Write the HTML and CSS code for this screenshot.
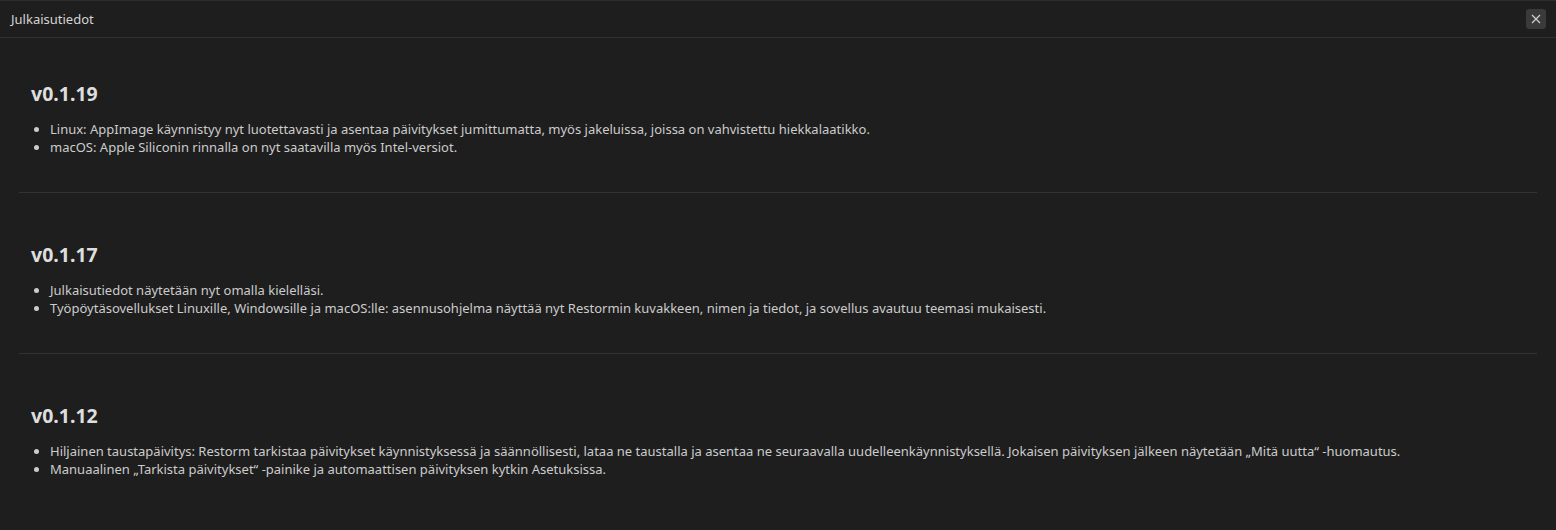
FILE: index.html
```html
<!DOCTYPE html>
<html lang="fi">
<head>
  <meta charset="UTF-8">
  <meta name="viewport" content="width=device-width, initial-scale=1.0">
  <title>Julkaisutiedot</title>
  <link rel="stylesheet" href="styles.css">
</head>
<body>
  <div class="dialog">
    <header class="dialog-header">
      <span class="dialog-title">Julkaisutiedot</span>
      <button class="close-btn" aria-label="Sulje">
        <svg width="10" height="10" viewBox="0 0 10 10">
          <path d="M1 1L9 9M9 1L1 9" stroke="#d0d0d0" stroke-width="1.2" fill="none"/>
        </svg>
      </button>
    </header>

    <main class="notes">
      <section class="release">
        <h2>v0.1.19</h2>
        <ul>
          <li>Linux: AppImage käynnistyy nyt luotettavasti ja asentaa päivitykset jumittumatta, myös jakeluissa, joissa on vahvistettu hiekkalaatikko.</li>
          <li>macOS: Apple Siliconin rinnalla on nyt saatavilla myös Intel-versiot.</li>
        </ul>
      </section>

      <section class="release">
        <h2>v0.1.17</h2>
        <ul>
          <li>Julkaisutiedot näytetään nyt omalla kielelläsi.</li>
          <li>Työpöytäsovellukset Linuxille, Windowsille ja macOS:lle: asennusohjelma näyttää nyt Restormin kuvakkeen, nimen ja tiedot, ja sovellus avautuu teemasi mukaisesti.</li>
        </ul>
      </section>

      <section class="release">
        <h2>v0.1.12</h2>
        <ul>
          <li>Hiljainen taustapäivitys: Restorm tarkistaa päivitykset käynnistyksessä ja säännöllisesti, lataa ne taustalla ja asentaa ne seuraavalla uudelleenkäynnistyksellä. Jokaisen päivityksen jälkeen näytetään „Mitä uutta“ -huomautus.</li>
          <li>Manuaalinen „Tarkista päivitykset“ -painike ja automaattisen päivityksen kytkin Asetuksissa.</li>
        </ul>
      </section>
    </main>
  </div>
</body>
</html>
```

FILE: styles.css
```css
/* General Reset */
* {
  margin: 0;
  padding: 0;
  box-sizing: border-box;
}

body {
  font-family: 'Noto Sans', 'Open Sans', sans-serif;
  background-color: #1e1e1e;
  color: #cccccc;
  min-height: 100vh;
}

.dialog {
  border-top: 1px solid #2e2e2e;
  min-height: 100vh;
}

/* Header */
.dialog-header {
  display: flex;
  justify-content: space-between;
  align-items: center;
  height: 37px;
  padding: 0 11px;
  border-bottom: 1px solid #303030;
  background-color: #1e1e1e;
}

.dialog-title {
  font-size: 13px;
  color: #d4d4d4;
}

.close-btn {
  display: flex;
  justify-content: center;
  align-items: center;
  width: 20px;
  height: 20px;
  margin-right: -1px;
  border: none;
  border-radius: 3px;
  background-color: #3a3a3a;
  cursor: pointer;
}

/* Release notes */
.notes {
  padding: 0 19px;
}

.release {
  padding: 44px 12px 36px;
}

.release + .release {
  border-top: 1px solid #333333;
  padding-top: 50px;
}

.release h2 {
  font-size: 19.5px;
  line-height: 24px;
  font-weight: 700;
  color: #dedede;
  margin-bottom: 14px;
}

.release ul {
  padding-left: 19px;
}

.release li {
  font-size: 13px;
  line-height: 18px;
  color: #cccccc;
}
```
